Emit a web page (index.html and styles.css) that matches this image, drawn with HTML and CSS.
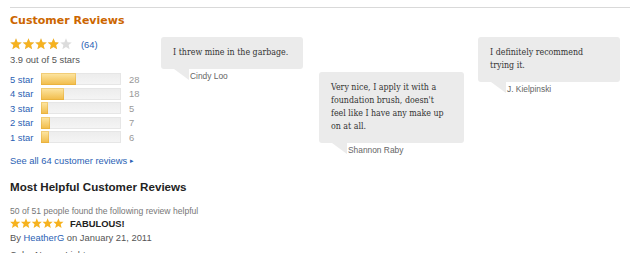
FILE: index.html
```html
<!DOCTYPE html>
<html>
<head>
<meta charset="utf-8">
<link rel="stylesheet" href="styles.css">
</head>
<body>
<div class="page">
  <div class="rule"></div>
  <h2 class="title">Customer Reviews</h2>
  <div class="top">
    <div class="summary">
      <div class="rating">
        <svg class="stars" width="64" height="12" viewBox="0 0 64 12">
          <defs>
            <polygon id="st" points="6,0.3 7.6,4.2 11.8,4.4 8.6,7.1 9.6,11.3 6,9 2.4,11.3 3.4,7.1 0.2,4.4 4.4,4.2"/>
            <clipPath id="part"><rect x="0" y="0" width="48.4" height="12"/></clipPath>
          </defs>
          <g fill="#dcdcdc">
            <use href="#st" x="0"/><use href="#st" x="12.5"/><use href="#st" x="25"/><use href="#st" x="37.5"/><use href="#st" x="50"/>
          </g>
          <g fill="#f6b21f" clip-path="url(#part)">
            <use href="#st" x="0"/><use href="#st" x="12.5"/><use href="#st" x="25"/><use href="#st" x="37.5"/><use href="#st" x="50"/>
          </g>
        </svg>
        <a class="link count-link">(64)</a>
      </div>
      <div class="avg">3.9 out of 5 stars</div>
      <div class="bars">
        <div class="bar-row"><a class="link label">5 star</a><div class="track"><div class="fill" style="width:35px"></div></div><span class="num">28</span></div>
        <div class="bar-row"><a class="link label">4 star</a><div class="track"><div class="fill" style="width:22.5px"></div></div><span class="num">18</span></div>
        <div class="bar-row"><a class="link label">3 star</a><div class="track"><div class="fill" style="width:6.5px"></div></div><span class="num">5</span></div>
        <div class="bar-row"><a class="link label">2 star</a><div class="track"><div class="fill" style="width:9px"></div></div><span class="num">7</span></div>
        <div class="bar-row"><a class="link label">1 star</a><div class="track"><div class="fill" style="width:7.5px"></div></div><span class="num">6</span></div>
      </div>
      <a class="link see-all">See all 64 customer reviews <span class="arrow">&#9656;</span></a>
    </div>
    <div class="quotes">
      <div class="quote q1">
        <div class="bubble">I threw mine in the garbage.</div>
        <div class="who">Cindy Loo</div>
      </div>
      <div class="quote q2">
        <div class="bubble">Very nice, I apply it with a foundation brush, doesn't feel like I have any make up on at all.</div>
        <div class="who">Shannon Raby</div>
      </div>
      <div class="quote q3">
        <div class="bubble">I definitely recommend trying it.</div>
        <div class="who">J. Kielpinski</div>
      </div>
    </div>
  </div>
  <div class="helpful">
    <h3 class="sub">Most Helpful Customer Reviews</h3>
    <div class="votes">50 of 51 people found the following review helpful</div>
    <div class="review-head">
      <svg class="stars-sm" width="54" height="11" viewBox="0 0 54 11">
        <defs>
          <polygon id="ss" points="5.2,0.2 6.6,3.7 10.3,3.8 7.5,6.2 8.4,9.9 5.2,7.9 2,9.9 2.9,6.2 0.1,3.8 3.8,3.7"/>
        </defs>
        <g fill="#f6b21f">
          <use href="#ss" x="0"/><use href="#ss" x="10.8"/><use href="#ss" x="21.6"/><use href="#ss" x="32.4"/><use href="#ss" x="43.2"/>
        </g>
      </svg>
      <span class="rtitle">FABULOUS!</span>
    </div>
    <div class="byline">By <a class="link">HeatherG</a> on January 21, 2011</div>
    <div class="byline next">Color Name: Light</div>
  </div>
</div>
</body>
</html>
```

FILE: styles.css
```css
html, body {
  margin: 0;
  padding: 0;
  background: #fff;
}
.page {
  padding: 7px 0 0 10px;
  font-family: "Liberation Sans", Arial, sans-serif;
  color: #555;
  overflow: hidden;
  height: 246px;
}
.rule {
  height: 1px;
  background: #d9d9d9;
}
.title {
  margin: 6px 0 0;
  font-family: "DejaVu Sans", Verdana, sans-serif;
  font-size: 11px;
  line-height: 14px;
  font-weight: bold;
  color: #cc6600;
}
.top {
  display: flex;
  margin-top: 9px;
}
.summary {
  width: 151px;
  flex: none;
  display: flex;
  flex-direction: column;
  align-items: flex-start;
}
.rating {
  display: flex;
  align-items: center;
  height: 14px;
}
.stars {
  display: block;
}
.link {
  color: #2b5fb4;
  text-decoration: none;
}
.count-link {
  font-size: 9.4px;
  margin-left: 7px;
}
.avg {
  margin-top: 3px;
  font-size: 9.4px;
  line-height: 12px;
  color: #555;
}
.bars {
  margin-top: 7px;
  display: flex;
  flex-direction: column;
  gap: 2.5px;
}
.bar-row {
  display: flex;
  align-items: center;
  height: 12px;
  font-size: 9.4px;
}
.label {
  width: 31px;
  flex: none;
}
.track {
  width: 80px;
  height: 12px;
  background: linear-gradient(#ececec, #f5f5f5);
  box-shadow: inset 0 0 0 1px #e6e6e6;
  flex: none;
  display: flex;
}
.fill {
  height: 12px;
  background: linear-gradient(#fde7a6, #f1bb47);
  box-shadow: inset 0 0 0 1px rgba(220,160,40,0.35);
}
.num {
  margin-left: 8px;
  color: #999;
}
.see-all {
  margin-top: 12px;
  font-size: 9.4px;
  line-height: 12px;
}
.arrow {
  font-size: 7px;
  vertical-align: 1px;
}
.quotes {
  display: flex;
  align-items: flex-start;
}
.quote {
  display: flex;
  flex-direction: column;
}
.q1 { width: 142px; }
.q2 { width: 145px; margin-left: 16px; margin-top: 35px; }
.q3 { width: 142px; margin-left: 14px; }
.bubble {
  position: relative;
  background: #ebebeb;
  border-radius: 3px;
  padding: 9px 10px 10px 12px;
  font-family: "DejaVu Serif", Georgia, serif;
  font-stretch: semi-condensed;
  font-size: 8.8px;
  line-height: 13px;
  color: #333;
}
.q2 .bubble { padding-right: 17px; }
.q3 .bubble { padding-right: 22px; }
.bubble::after {
  content: "";
  position: absolute;
  top: 100%;
  left: 13px;
  width: 0;
  height: 0;
  border-top: 11px solid #ebebeb;
  border-left: 15px solid transparent;
}
.who {
  padding-left: 29px;
  font-size: 8.4px;
  line-height: 14px;
  color: #666;
}
.helpful {
  margin-top: 13px;
}
.sub {
  margin: 0;
  font-size: 11.6px;
  line-height: 14px;
  font-weight: bold;
  color: #222;
}
.votes {
  margin-top: 11px;
  font-size: 8.6px;
  line-height: 12px;
  color: #777;
}
.review-head {
  display: flex;
  align-items: center;
  height: 12px;
}
.stars-sm {
  display: block;
}
.rtitle {
  margin-left: 6px;
  font-size: 9.4px;
  font-weight: bold;
  color: #222;
}
.byline {
  margin-top: 3px;
  font-size: 9.4px;
  line-height: 12px;
  color: #555;
}
.byline.next {
  margin-top: 5px;
}
```
